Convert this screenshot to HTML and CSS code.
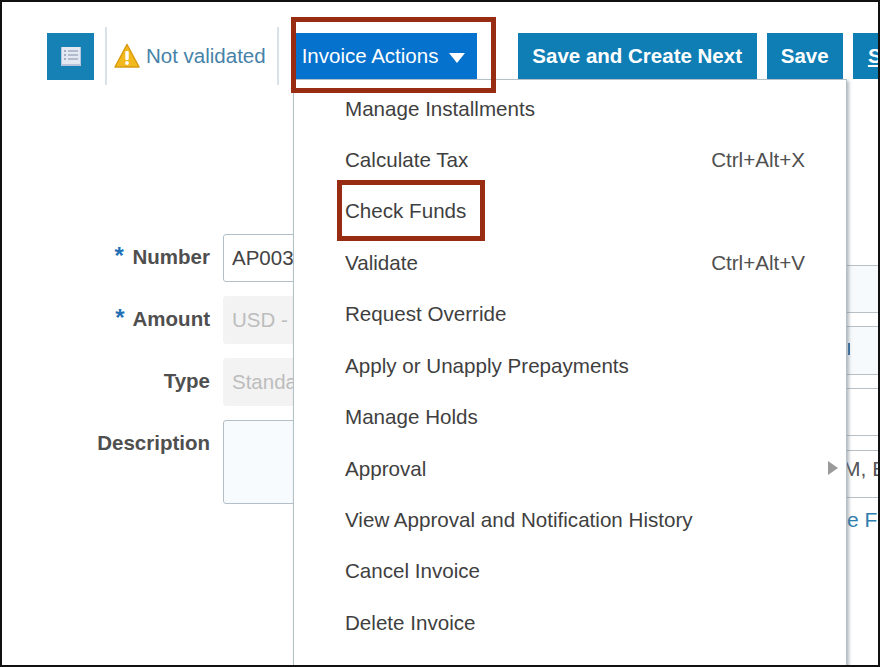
FILE: index.html
```html
<!DOCTYPE html>
<html lang="en">
<head>
<meta charset="UTF-8">
<title>Invoice Actions</title>
<link rel="stylesheet" href="styles.css">
</head>
<body>

<div class="frame">

  <div class="toolbar">
    <button class="btn-icon">
      <svg width="22" height="22" viewBox="0 0 22 22">
        <rect x="1" y="2" width="20" height="19" fill="#b9c4dc"/>
        <rect x="2" y="2" width="18" height="17" fill="#e4e8f2"/>
        <path d="M4 6h2M4 10h2M4 14h2" stroke="#a3aec2" stroke-width="2"/>
        <path d="M8 6h10M8 10h10M8 14h10" stroke="#b3bccd" stroke-width="2"/>
      </svg>
    </button>
    <div class="sep sep-first"></div>
    <svg class="warn" width="26" height="26" viewBox="0 0 26 26">
      <path d="M13 1.5 L25 24 H1 Z" fill="#f2b91c" stroke="#d99a10" stroke-width="1.5" stroke-linejoin="round"/>
      <rect x="11.3" y="8" width="3.4" height="9" rx="1" fill="#fff"/>
      <circle cx="13" cy="20" r="1.9" fill="#fff"/>
    </svg>
    <span class="status">Not validated</span>
    <div class="sep sep-second"></div>
    <button class="btn-actions">Invoice Actions <span class="caret"></span></button>
    <button class="btn btn-next">Save and Create Next</button>
    <button class="btn btn-save">Save</button>
    <button class="btn btn-submit"><u>S</u>ubmit</button>
  </div>

  <div class="form">
    <div class="form-left">
      <label class="lbl"><span class="req">*</span> Number</label>
      <div class="field">AP003</div>
      <label class="lbl"><span class="req">*</span> Amount</label>
      <div class="field field-off">USD -</div>
      <label class="lbl">Type</label>
      <div class="field field-off">Standard</div>
      <label class="lbl">Description</label>
      <div class="field field-desc"></div>
    </div>
    <div class="form-right">
      <div class="cell cell-tint"></div>
      <div class="cell cell-tint"><span class="tick"></span></div>
      <div class="cell"></div>
      <div class="cell cell-name">M, E</div>
      <div class="right-link">e Fi</div>
    </div>
  </div>

  <div class="menu">
    <div class="item">Manage Installments</div>
    <div class="item">Calculate Tax <span class="keys">Ctrl+Alt+X</span></div>
    <div class="item">Check Funds</div>
    <div class="item">Validate <span class="keys">Ctrl+Alt+V</span></div>
    <div class="item">Request Override</div>
    <div class="item">Apply or Unapply Prepayments</div>
    <div class="item">Manage Holds</div>
    <div class="item">Approval <span class="arrow"></span></div>
    <div class="item">View Approval and Notification History</div>
    <div class="item">Cancel Invoice</div>
    <div class="item">Delete Invoice</div>
  </div>

  <div class="callout callout-actions"></div>
  <div class="callout callout-funds"></div>

</div>

</body>
</html>
```

FILE: styles.css
```css
body {
  margin: 0;
  font-family: "Liberation Sans", Arial, sans-serif;
  background-color: #fff;
}
.frame {
  position: relative;
  width: 880px;
  height: 667px;
  box-sizing: border-box;
  border: 2px solid #111;
  overflow: hidden;
  background-color: #fff;
}

/* barra de cima */
.toolbar {
  display: flex;
  align-items: center;
  height: 58px;
  margin-top: 25px;
  padding-left: 45px;
  width: 1000px;
}
button {
  border: none;
  font-family: inherit;
  padding: 0;
  color: #fff;
}
.btn-icon {
  display: flex;
  align-items: center;
  justify-content: center;
  width: 47px;
  height: 47px;
  background-color: #1581b5;
}
.sep {
  width: 2px;
  height: 58px;
  background-color: #d9e2e8;
}
.sep-first {
  margin-left: 11px;
}
.warn {
  margin-left: 7px;
}
.status {
  margin-left: 6px;
  font-size: 20.5px;
  color: #4682a8;
  white-space: nowrap;
}
.sep-second {
  margin-left: 11px;
}
.btn-actions {
  width: 182px;
  height: 47px;
  margin-left: 16px;
  background-color: #0572ce;
  font-size: 20.5px;
  text-align: left;
  padding-left: 7px;
  white-space: nowrap;
}
.caret {
  display: inline-block;
  margin-left: 5px;
  border-left: 8px solid transparent;
  border-right: 8px solid transparent;
  border-top: 10px solid #fff;
  vertical-align: 0;
}
.btn {
  height: 46px;
  background-color: #0f7eb5;
  font-size: 20.5px;
  font-weight: bold;
}
.btn-next {
  width: 239px;
  margin-left: 41px;
}
.btn-save {
  width: 76px;
  margin-left: 10px;
}
.btn-submit {
  width: 100px;
  margin-left: 10px;
}

/* formulario atras do menu */
.form {
  display: flex;
  margin-top: 149px;
}
.form-left {
  display: grid;
  grid-template-columns: 208px 400px;
  column-gap: 13px;
  grid-auto-rows: 48px;
  row-gap: 14px;
  align-items: center;
  width: 700px;
  flex: none;
}
.lbl {
  text-align: right;
  font-size: 20.5px;
  font-weight: bold;
  color: #4f4f4f;
  margin-top: -2px;
}
.req {
  color: #1f70b5;
  font-size: 24px;
  line-height: 20px;
  margin-right: 3px;
}
.field {
  box-sizing: border-box;
  height: 48px;
  line-height: 45px;
  padding-left: 8px;
  border: 1px solid #b3bfc8;
  border-radius: 3px;
  font-size: 20.5px;
  color: #444;
}
.field-off {
  border-color: #f3f3f3;
  background-color: #f3f3f3;
  color: #bdbdbd;
}
.field-desc {
  height: 84px;
  align-self: start;
  background-color: #f7fbfd;
}
.form-right {
  margin-top: 30.5px;
  flex: none;
  width: 200px;
}
.cell {
  box-sizing: border-box;
  height: 48.5px;
  margin-bottom: 13.2px;
  border-top: 1px solid #b8c0c6;
  border-bottom: 1px solid #b8c0c6;
  padding-left: 146px;
  font-size: 21px;
  line-height: 36px;
  color: #555;
  white-space: nowrap;
}
.cell-tint {
  background-color: #f6fafd;
}
.cell-name {
  margin-bottom: 10px;
  padding-left: 141px;
}
.tick {
  display: inline-block;
  width: 2px;
  height: 12px;
  margin-bottom: -3px;
  background-color: #2f6ea5;
}
.right-link {
  padding-left: 145px;
  font-size: 21px;
  color: #2e7dad;
  white-space: nowrap;
}

/* menu aberto */
.menu {
  position: absolute;
  left: 291px;
  top: 77px;
  width: 554px;
  height: 600px;
  box-sizing: border-box;
  padding-top: 2.8px;
  background-color: #fff;
  border: 1px solid #b4c0c8;
  box-shadow: 2px 2px 3px rgba(110, 120, 130, 0.5);
}
.item {
  display: flex;
  justify-content: space-between;
  align-items: center;
  box-sizing: border-box;
  height: 51.45px;
  padding-left: 51px;
  padding-right: 41px;
  font-size: 20.6px;
  color: #3f3f3f;
  position: relative;
}
.keys {
  color: #505050;
}
.arrow {
  position: absolute;
  right: 8px;
  top: 18px;
  border-top: 7px solid transparent;
  border-bottom: 7px solid transparent;
  border-left: 10px solid #9a9a9a;
}

/* caixas vermelhas do tutorial */
.callout {
  position: absolute;
  box-sizing: border-box;
  border: 5px solid #982c12;
}
.callout-actions {
  left: 289px;
  top: 15px;
  width: 205px;
  height: 76px;
}
.callout-funds {
  left: 335px;
  top: 178px;
  width: 148px;
  height: 61px;
}
```
